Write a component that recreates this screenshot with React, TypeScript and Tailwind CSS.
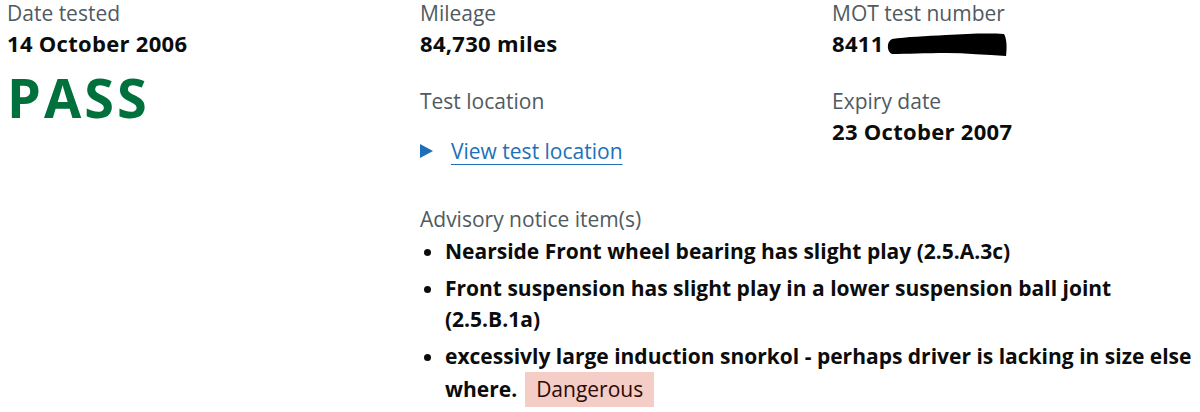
import React from "react";

const font = { fontFamily: "'Open Sans', 'Noto Sans', sans-serif" };

function Label({ children }: { children: React.ReactNode }) {
  return <p className="text-[21px] leading-[30px] text-[#505a5f]">{children}</p>;
}

function Value({ children }: { children: React.ReactNode }) {
  return <p className="text-[22px] font-bold leading-[30px] tracking-[0.3px] text-[#0b0c0c]">{children}</p>;
}

function Redacted() {
  return (
    <svg width="122" height="24" viewBox="0 0 122 24" className="ml-[2px] inline-block align-[-5px]">
      <path
        d="M6 6 C20 4 40 3 60 2 C80 1 100 0 118 1 C121 6 121 16 120 23 C100 22 80 20 60 20 C40 20 20 21 6 21 C1 19 0 9 6 6 Z"
        fill="#000"
      />
    </svg>
  );
}

export default function App() {
  return (
    <div className="h-[412px] w-[1200px] overflow-hidden bg-white" style={font}>
      <div className="-mt-[2px] grid grid-cols-[413px_412px_1fr] pl-[7px]">
        <div>
          <Label>Date tested</Label>
          <Value>14 October 2006</Value>
          <p className="mt-[10px] text-[54px] font-bold leading-[58px] tracking-[3px] text-[#00703c]">PASS</p>
        </div>

        <div>
          <Label>Mileage</Label>
          <Value>84,730 miles</Value>
          <div className="mt-[28px]">
            <Label>Test location</Label>
            <div className="mt-[20px] flex items-center gap-[18px]">
              <span className="h-0 w-0 border-y-[7px] border-l-[13px] border-y-transparent border-l-[#1d70b8]" />
              <a href="#" className="text-[21px] leading-[30px] text-[#1d70b8] underline underline-offset-[5px] decoration-1">
                View test location
              </a>
            </div>
          </div>
        </div>

        <div>
          <Label>MOT test number</Label>
          <Value>
            8411
            <Redacted />
          </Value>
          <div className="mt-[28px]">
            <Label>Expiry date</Label>
            <Value>23 October 2007</Value>
          </div>
        </div>

        <div className="col-start-2 col-span-2 mt-[38px] pr-[4px]">
          <Label>Advisory notice item(s)</Label>
          <ul className="mt-[2px] list-disc pl-[25px] text-[21px] font-bold leading-[31px] text-[#0b0c0c]">
            <li className="mb-[6px]">Nearside Front wheel bearing has slight play (2.5.A.3c)</li>
            <li className="mb-[6px]">Front suspension has slight play in a lower suspension ball joint (2.5.B.1a)</li>
            <li>
              excessivly large induction snorkol - perhaps driver is lacking in size else where.
              <span className="ml-[8px] inline-block bg-[#f4cdc6] px-[11px] py-[3px] font-normal leading-[29px] text-[#2a0b06]">
                Dangerous
              </span>
            </li>
          </ul>
        </div>
      </div>
    </div>
  );
}
